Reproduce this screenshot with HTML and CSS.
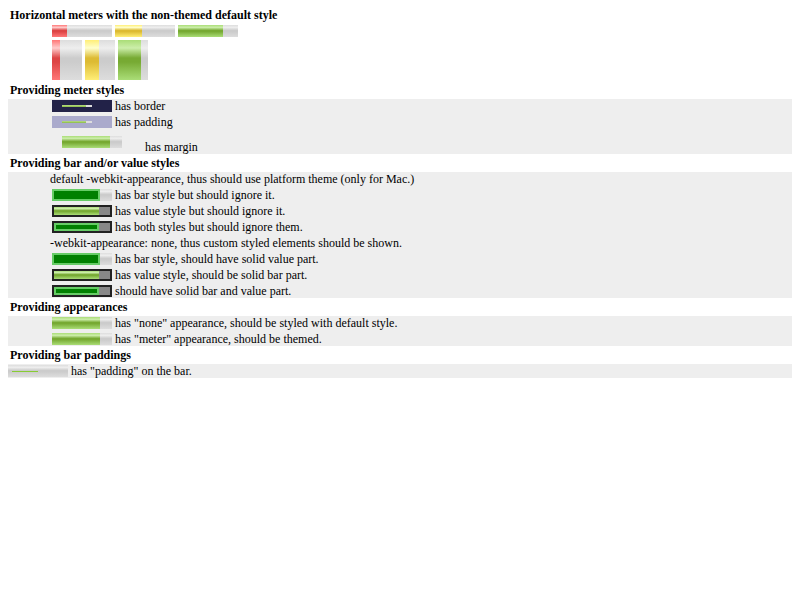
FILE: index.html
```html
<!DOCTYPE html>
<html>
<head>
<meta charset="utf-8">
<title>Meter styles</title>
<link rel="stylesheet" href="styles.css">
</head>
<body>
<h3 class="head">Horizontal meters with the non-themed default style</h3>
<div class="line ind"><span class="meter"><span class="val bad" style="width:25%"></span></span> <span class="meter"><span class="val sub" style="width:45%"></span></span> <span class="meter"><span class="val ok" style="width:75%"></span></span></div>
<div class="line ind"><span class="meter tall"><span class="val bad" style="width:25%"></span></span> <span class="meter tall"><span class="val sub" style="width:45%"></span></span> <span class="meter tall"><span class="val ok" style="width:75%"></span></span></div>

<h3 class="head">Providing meter styles</h3>
<div class="box">
  <div class="line ind"><span class="meter navy"><span class="inner"><span class="val ok" style="width:80%"></span></span></span> has border</div>
  <div class="line ind"><span class="meter lavender"><span class="inner"><span class="val ok" style="width:80%"></span></span></span> has padding</div>
  <div class="line ind"><span class="meter spaced"><span class="val ok" style="width:80%"></span></span> has margin</div>
</div>

<h3 class="head">Providing bar and/or value styles</h3>
<div class="box">
  <div class="line note">default -webkit-appearance, thus should use platform theme (only for Mac.)</div>
  <div class="line ind"><span class="meter"><span class="val solid" style="width:80%"></span></span> has bar style but should ignore it.</div>
  <div class="line ind"><span class="meter dark"><span class="val ok" style="width:80%"></span></span> has value style but should ignore it.</div>
  <div class="line ind"><span class="meter dark"><span class="val solid" style="width:80%"></span></span> has both styles but should ignore them.</div>
  <div class="line note">-webkit-appearance: none, thus custom styled elements should be shown.</div>
  <div class="line ind"><span class="meter"><span class="val solid" style="width:80%"></span></span> has bar style, should have solid value part.</div>
  <div class="line ind"><span class="meter dark"><span class="val ok" style="width:80%"></span></span> has value style, should be solid bar part.</div>
  <div class="line ind"><span class="meter dark"><span class="val solid" style="width:80%"></span></span> should have solid bar and value part.</div>
</div>

<h3 class="head">Providing appearances</h3>
<div class="box">
  <div class="line ind"><span class="meter"><span class="val ok" style="width:80%"></span></span> has "none" appearance, should be styled with default style.</div>
  <div class="line ind"><span class="meter"><span class="val ok" style="width:80%"></span></span> has "meter" appearance, should be themed.</div>
</div>

<h3 class="head">Providing bar paddings</h3>
<div class="box">
  <div class="line"><span class="meter"><span class="thin"></span></span> has "padding" on the bar.</div>
</div>
</body>
</html>
```

FILE: styles.css
```css
body {
  margin: 6px 8px 8px;
  font-family: "Liberation Serif", "Times New Roman", serif;
  font-size: 12px;
  line-height: 14px;
  color: #000;
  background: #fff;
}

.head {
  font-size: 12px;
  font-weight: bold;
  line-height: 14px;
  margin: 2px 0;
  padding-left: 2px;
}

.line {
  margin: 0 0 2px;
  white-space: nowrap;
}

.ind {
  padding-left: 44px;
}

.note {
  padding-left: 42px;
}

.box {
  background: #eee;
}

.meter {
  display: inline-block;
  box-sizing: border-box;
  width: 60px;
  height: 12px;
  vertical-align: -2px;
  background: linear-gradient(#ddd, #eee 20%, #ccc 45%, #ccc 55%, #ddd);
}

.meter.tall {
  width: 30px;
  height: 40px;
}

.val {
  display: block;
  height: 100%;
}

.ok {
  background: linear-gradient(#ad7, #cea 20%, #7a3 45%, #7a3 55%, #ad7);
}

.sub {
  background: linear-gradient(#fe7, #ffc 20%, #db3 45%, #db3 55%, #fe7);
}

.bad {
  background: linear-gradient(#f77, #fcc 20%, #d44 45%, #d44 55%, #f77);
}

.meter.navy {
  background: #222248;
}

.meter.lavender {
  background: #aaaacc;
}

.inner {
  display: block;
  width: 30px;
  height: 2px;
  margin: 5px 0 0 10px;
  background: #ddd;
}

.inner .val {
  background: linear-gradient(#bd8, #8b4);
}

.meter.spaced {
  margin: 5px 20px 5px 10px;
}

.solid {
  box-sizing: border-box;
  background: #008000;
  border: 2px solid #66cc66;
}

.meter.dark {
  border: 2px solid #222;
  background: #888;
}

.thin {
  display: block;
  width: 26px;
  height: 1px;
  margin: 6px 0 0 4px;
  background: #8c3;
}
```
